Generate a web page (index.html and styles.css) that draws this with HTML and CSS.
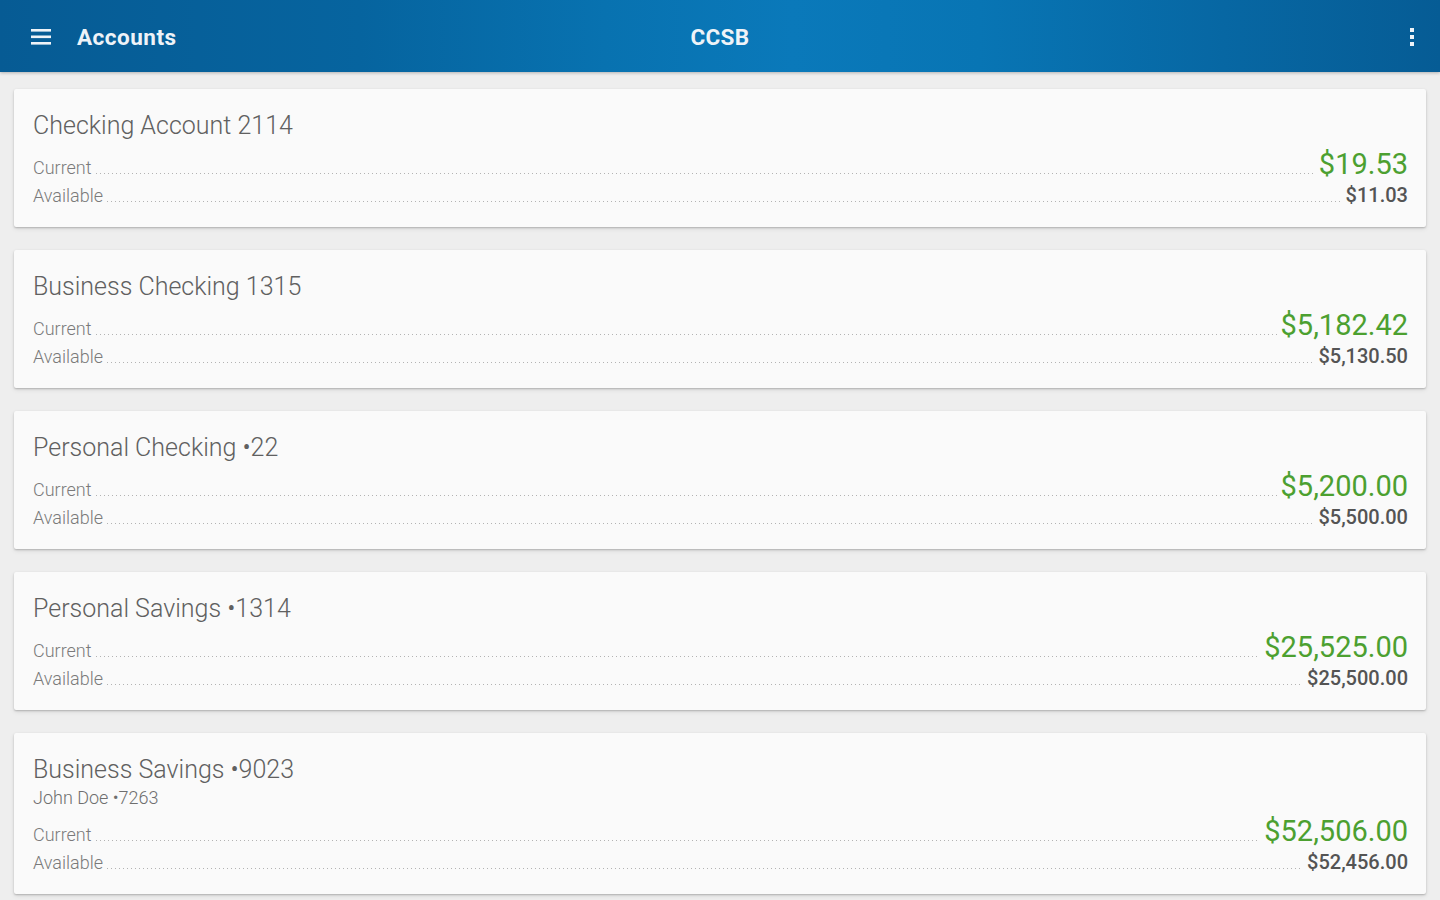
FILE: index.html
```html
<!DOCTYPE html>
<html lang="en">
<head>
<meta charset="utf-8">
<title>CCSB - Accounts</title>
<link rel="stylesheet" href="styles.css">
</head>
<body>
<header class="appbar">
  <div class="appbar-left">
    <svg class="menu-icon" width="22" height="18" viewBox="0 0 22 18" aria-hidden="true">
      <rect x="1" y="2" width="20" height="2.6" fill="#eef3f8"/>
      <rect x="1" y="8.5" width="20" height="2.6" fill="#eef3f8"/>
      <rect x="1" y="15" width="20" height="2.6" fill="#eef3f8"/>
    </svg>
    <span class="appbar-title">Accounts</span>
  </div>
  <div class="appbar-center">CCSB</div>
  <div class="appbar-right">
    <svg class="more-icon" width="6" height="20" viewBox="0 0 6 20" aria-hidden="true">
      <rect x="1" y="1" width="4" height="4" fill="#eef3f8"/>
      <rect x="1" y="8" width="4" height="4" fill="#eef3f8"/>
      <rect x="1" y="15" width="4" height="4" fill="#eef3f8"/>
    </svg>
  </div>
</header>

<main class="accounts">
  <section class="card">
    <div class="title">Checking Account 2114</div>
    <div class="row row-current"><span class="label">Current</span><span class="dots"></span><span class="amount">$19.53</span></div>
    <div class="row row-available"><span class="label">Available</span><span class="dots"></span><span class="avail">$11.03</span></div>
  </section>

  <section class="card">
    <div class="title">Business Checking 1315</div>
    <div class="row row-current"><span class="label">Current</span><span class="dots"></span><span class="amount">$5,182.42</span></div>
    <div class="row row-available"><span class="label">Available</span><span class="dots"></span><span class="avail">$5,130.50</span></div>
  </section>

  <section class="card">
    <div class="title">Personal Checking •22</div>
    <div class="row row-current"><span class="label">Current</span><span class="dots"></span><span class="amount">$5,200.00</span></div>
    <div class="row row-available"><span class="label">Available</span><span class="dots"></span><span class="avail">$5,500.00</span></div>
  </section>

  <section class="card">
    <div class="title">Personal Savings •1314</div>
    <div class="row row-current"><span class="label">Current</span><span class="dots"></span><span class="amount">$25,525.00</span></div>
    <div class="row row-available"><span class="label">Available</span><span class="dots"></span><span class="avail">$25,500.00</span></div>
  </section>

  <section class="card">
    <div class="title">Business Savings •9023</div>
    <div class="subtitle">John Doe •7263</div>
    <div class="row row-current"><span class="label">Current</span><span class="dots"></span><span class="amount">$52,506.00</span></div>
    <div class="row row-available"><span class="label">Available</span><span class="dots"></span><span class="avail">$52,456.00</span></div>
  </section>
</main>
</body>
</html>
```

FILE: styles.css
```css
* {
  box-sizing: border-box;
}

html, body {
  margin: 0;
  padding: 0;
  height: 900px;
  overflow: hidden;
}

body {
  background: #eeeeee;
  font-family: Roboto, "Liberation Sans", Arial, sans-serif;
}

.appbar {
  height: 72px;
  display: grid;
  grid-template-columns: 1fr auto 1fr;
  align-items: center;
  background: linear-gradient(to right, #065b94 0%, #06649f 25%, #0872b0 42%, #0a79ba 55%, #0875b4 68%, #0767a3 85%, #065c95 100%);
  box-shadow: 0 1px 3px rgba(0, 0, 0, 0.25);
  position: relative;
  z-index: 2;
  color: #eef3f8;
}

.appbar-left {
  display: flex;
  align-items: center;
  padding-left: 30px;
}

.menu-icon {
  display: block;
  margin-top: -1px;
}

.appbar-title {
  margin-left: 25px;
  font-size: 22.5px;
  font-weight: 700;
  letter-spacing: 0.5px;
  padding-top: 2px;
}

.appbar-center {
  font-size: 22.5px;
  font-weight: 700;
  letter-spacing: 0.3px;
  padding-top: 2px;
}

.appbar-right {
  display: flex;
  justify-content: flex-end;
  padding-right: 25px;
}

.more-icon {
  display: block;
  margin-top: 1px;
}

.accounts {
  padding: 17px 14px 0 14px;
  display: flex;
  flex-direction: column;
  gap: 23px;
}

.card {
  background: #fafafa;
  border-radius: 2px;
  box-shadow: 0 1px 2px rgba(0, 0, 0, 0.22), 0 2px 5px rgba(0, 0, 0, 0.08);
  padding: 22px 18px 20px 19px;
}

.title {
  font-size: 25px;
  line-height: 30px;
  color: #606060;
  font-weight: 300;
}

.subtitle {
  margin-top: 3px;
  font-size: 18px;
  line-height: 20px;
  font-weight: 300;
  color: #6e6e6e;
}

.row {
  display: flex;
  align-items: baseline;
}

.row-current {
  margin-top: 6px;
}

.row-available {
  margin-top: 2px;
}

.label {
  font-size: 18px;
  line-height: 20px;
  font-weight: 300;
  color: #7a7a7a;
}

.dots {
  flex: 1;
  height: 1px;
  margin: 0 4px 0 4px;
  background-image: linear-gradient(to right, #b3b3b3 0, #b3b3b3 1px, transparent 1px);
  background-size: 4px 1px;
  background-repeat: repeat-x;
}

.amount {
  font-size: 29px;
  line-height: 34px;
  color: #4ca030;
}

.avail {
  font-size: 20px;
  line-height: 24px;
  font-weight: 500;
  color: #545454;
}
```
